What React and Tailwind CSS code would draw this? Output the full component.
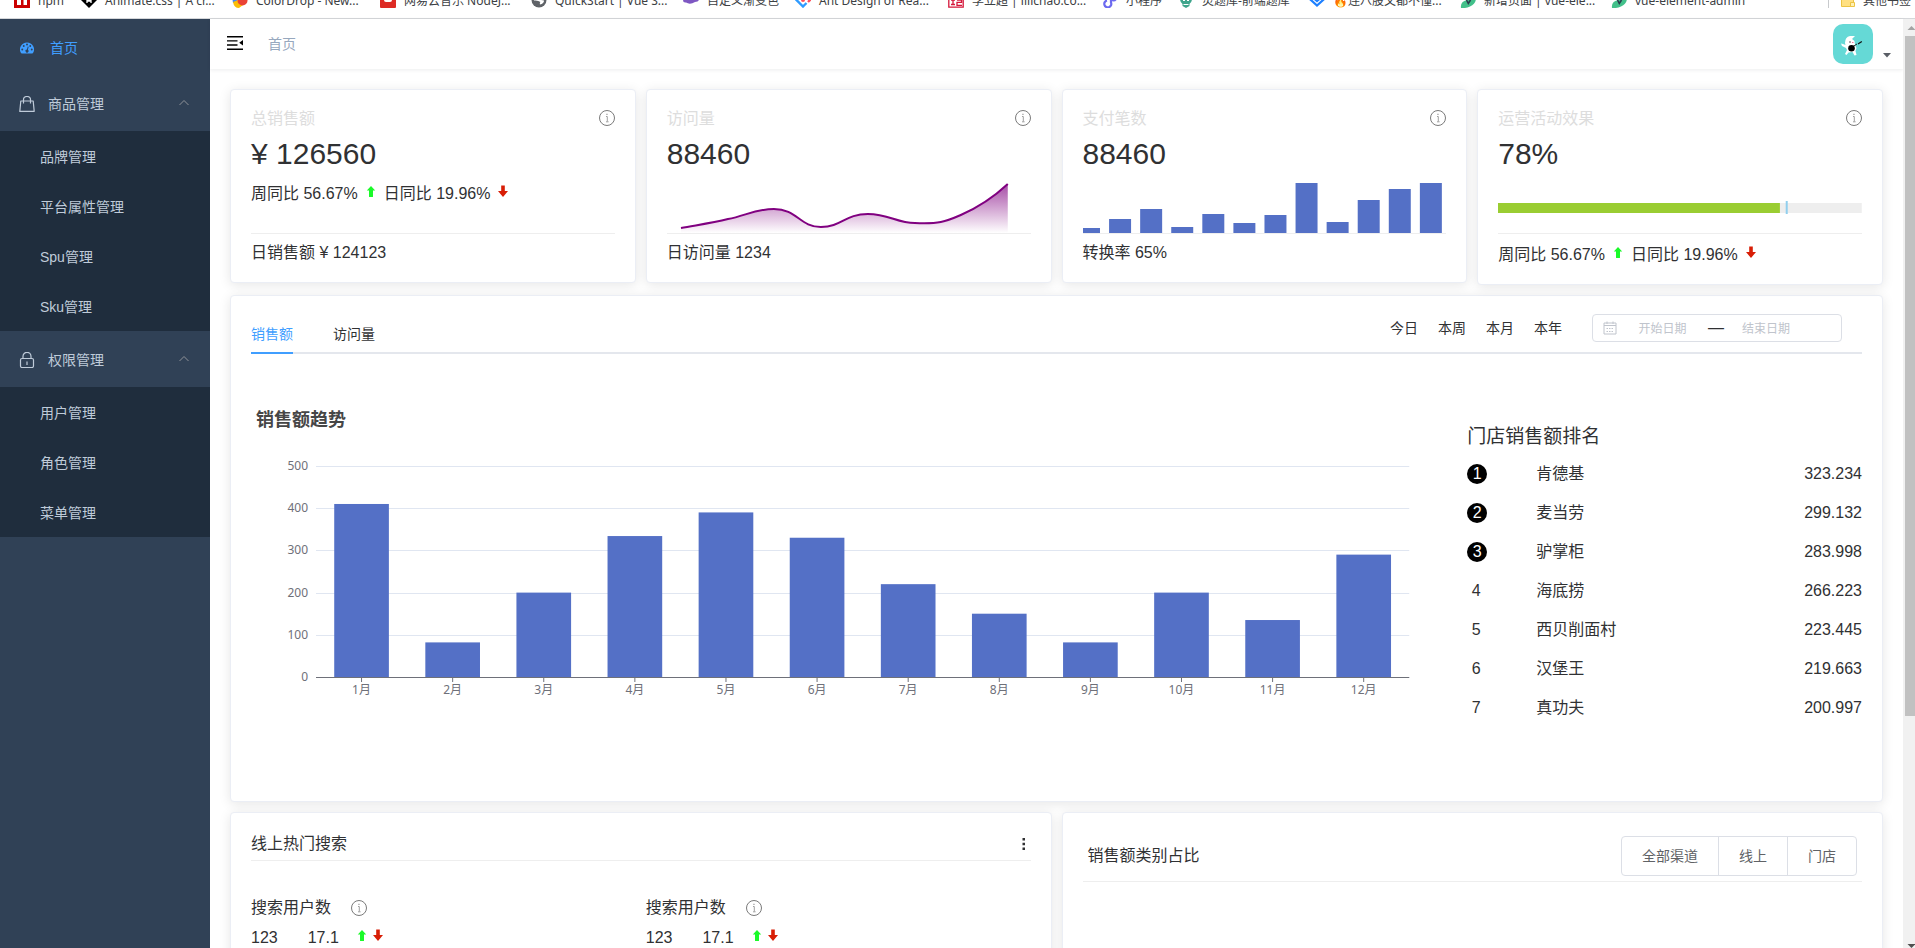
import { useState } from 'react';

// Icons
const DashboardIcon = () => (
  <svg className="h-3.5 w-3.5" viewBox="0 0 28 28" aria-hidden="true">
    <path fill="currentColor" d="M14 3a14 14 0 0 0-12 21.200Q2.600 25 3.500 25h21q.9 0 1.500-.8A14 14 0 0 0 14 3z" />
    <g fill="#304156">
      <circle cx="4.500" cy="17" r="1.900" />
      <circle cx="7.500" cy="10" r="1.900" />
      <circle cx="14" cy="7" r="1.900" />
      <circle cx="20.500" cy="10" r="1.900" />
      <circle cx="23.500" cy="17" r="1.900" />
      <path d="M15.500 10.800l1.800.5-1.500 6a3.100 3.100 0 1 1-1.900-.5z" />
    </g>
  </svg>
);

const BagIcon = () => (
  <svg className="h-4 w-4" viewBox="0 0 16 16" fill="none" stroke="currentColor" strokeWidth="1.200" strokeLinejoin="round" aria-hidden="true">
    <path d="M1.800 5h12.400l1 10.400H.8z" />
    <path d="M4.500 7.500V3.800a3.500 3.300 0 0 1 7 0v3.700" />
  </svg>
);

const LockIcon = () => (
  <svg className="h-4 w-4" viewBox="0 0 16 16" fill="none" stroke="currentColor" strokeWidth="1.200" aria-hidden="true">
    <rect x="1.500" y="6.500" width="13" height="9" rx="1.500" />
    <path d="M4 6.500V4.300a4 4 0 0 1 8 0v2.200M8 9.500v3.500" />
  </svg>
);

const ChevronUp = () => (
  <svg className="h-3 w-3 text-[#909399]" viewBox="0 0 12 12" fill="none" stroke="currentColor" aria-hidden="true">
    <path d="M1.500 7L6 2.500 10.500 7" />
  </svg>
);

const FoldIcon = () => (
  <svg className="h-4 w-4" viewBox="0 0 16 16" aria-hidden="true">
    <path d="M0 0h16v1.400H0zM0 4.200h10.500v1.400H0zM0 8.300h10.500v1.400H0zM0 12.500h16V14H0zM16 4v5.600l-3.800-2.800z" />
  </svg>
);

const InfoIcon = () => (
  <svg className="h-4 w-4 shrink-0" viewBox="0 0 16 16" fill="none" stroke="#7a7a7a" aria-hidden="true">
    <circle cx="8" cy="8" r="7.500" />
    <path stroke="#a0a0a0" d="M7 6.500h1.300v5M7 11.800h2.600" />
    <path stroke="#a0a0a0" strokeWidth="1.300" d="M7.300 4.300h1.300" />
  </svg>
);

const UpArrow = () => (
  <svg className="h-4 w-4 shrink-0 -translate-y-0.5" viewBox="0 0 16 16" fill="#1afa29" aria-label="up">
    <path d="M8 2l4.200 4.600H10v6q0 .5-.5.5H6.500q-.5 0-.5-.5v-6H3.800z" />
  </svg>
);

const DownArrow = () => (
  <svg className="h-4 w-4 shrink-0 -translate-y-0.5" viewBox="0 0 16 16" fill="#d81e06" aria-label="down">
    <path d="M6.200 1.500h3.600V7h3.200L8 13 3 7h3.200z" />
  </svg>
);

const CalendarIcon = () => (
  <svg className="h-3.5 w-3.5 shrink-0" viewBox="0 0 14 14" fill="none" stroke="#c0c4cc" aria-hidden="true">
    <path d="M1 2h12v11H1zM1 4.500h12M4 .5v2.500M10 .5v2.500" />
    <path strokeDasharray="1.500 1" d="M3.500 7.500h7M3.500 10.500h7" />
  </svg>
);

const VueLeaf = () => (
  <>
    <path fill="#42c08a" d="M1 16Q0 9 8 8l8-2q0 6-6 8.500-4 2-9 1.500z" />
    <path fill="none" stroke="#2b3b4e" strokeWidth="1.600" d="M6.500 8l1.800 3.500L10.500 8" />
  </>
);

// Browser bookmarks
const bookmarks = [
  { label: 'npm', width: 'w-[67px]', icon: <path fill="#cb0000" fillRule="evenodd" d="M0 0h16v16H0zM3 3v10h4V6h2.500v7H13V3z" /> },
  {
    label: 'Animate.css | A cr...', width: 'w-[151px]',
    icon: <><path d="M8 0l8 8-8 8-8-8z" /><path fill="none" stroke="#fff" strokeWidth="1.300" d="M6 11V7.500h4V11M6 9h4" /></>,
  },
  {
    label: 'ColorDrop - New...', width: 'w-[148px]',
    icon: <><path fill="#4285f4" d="M0 4h5v7H1z" /><path fill="#fbbc05" d="M1 10l5-2 5 5-4 3q-5 0-6-6z" /><circle cx="10.500" cy="8.500" r="5" fill="#ea4335" /></>,
  },
  {
    label: '网易云音乐 NodeJ...', width: 'w-[151px]',
    icon: <><rect width="16" height="16" rx="1" fill="#dd2b24" /><rect x="4" y="4" width="8" height="6" rx="2" fill="#fff" /></>,
  },
  {
    label: 'QuickStart | Vue S...', width: 'w-[152px]',
    icon: <><circle cx="8" cy="8" r="7.500" fill="#5f6368" /><path fill="#fff" d="M3 5h6l1 3 3 .5q0 3-4 4-.5-2 .5-2.500Q7 8 3 8.500z" /></>,
  },
  { label: '自定义渐变色', width: 'w-[112px]', icon: <path fill="#7e57c2" d="M0 8l9-5 7 5q-1 2-4 2-5 3-9 .5Q0 11 0 8z" /> },
  {
    label: 'Ant Design of Rea...', width: 'w-[153px]',
    icon: <><path fill="none" stroke="#2f9bff" strokeWidth="2.400" d="M11 4L8 1 1.500 8 8 14.500l3.500-3.500" /><circle cx="8" cy="8" r="2" fill="#ff4d5a" /><path fill="none" stroke="#ff4d5a" strokeWidth="2.400" d="M12.500 5.500L15 8l-2 2" /></>,
  },
  {
    label: '李立超 | lilichao.co...', width: 'w-[154px]',
    icon: <path fill="none" stroke="#d5173a" strokeWidth="1.300" d="M.8.800h14.400v14.400H.8zM3 8h4M3 12.500h4M5 8v5M9 8h4.500v2.300H9v3h5" />,
  },
  { label: '小程序', width: 'w-[76px]', icon: <path fill="none" stroke="#6c6af0" strokeWidth="2.200" d="M9 3v7.500a3.500 3.500 0 1 1-4-2M9 7q3 3 5 0" /> },
  {
    label: '灵题库-前端题库', width: 'w-[131px]',
    icon: <><path fill="#3fa58c" d="M2 7q0-7 6-7t6 7q0 3-2.500 5v2L8 16l-3.500-2v-2Q2 10 2 7z" /><path stroke="#fff" d="M5 8.500h2M9 8.500h2M5.500 12.500h5" /></>,
  },
  { label: '🔥连八股文都不懂...', width: 'w-[151px]', icon: <path fill="none" stroke="#1e80ff" strokeWidth="2.200" d="M.8 7L8 13.500 15.200 7M5 6.500L8 9l3-2.500" /> },
  { label: '新增页面 | vue-ele...', width: 'w-[151px]', icon: <VueLeaf /> },
  { label: 'vue-element-admin', width: 'w-[151px]', icon: <VueLeaf /> },
];

const menus = [
  { title: '商品管理', icon: <BagIcon />, children: ['品牌管理', '平台属性管理', 'Spu管理', 'Sku管理'] },
  { title: '权限管理', icon: <LockIcon />, children: ['用户管理', '角色管理', '菜单管理'] },
];

const payBars = [5, 14, 24, 6, 19, 10, 18, 50, 11, 33, 44, 50];
const monthSales = [410, 82, 200, 334, 390, 330, 220, 150, 82, 200, 135, 290];

const ranking = [
  ['肯德基', '323.234'],
  ['麦当劳', '299.132'],
  ['驴掌柜', '283.998'],
  ['海底捞', '266.223'],
  ['西贝削面村', '223.445'],
  ['汉堡王', '219.663'],
  ['真功夫', '200.997'],
];

function BookmarkBar() {
  return (
    <nav className="flex h-[19px] shrink-0 justify-between overflow-hidden border-b border-[#d5d7da] bg-white pl-3.5 font-['Noto_Sans','Noto_Sans_CJK_SC',sans-serif] text-xs text-[#3c4043]">
      <div className="-mt-2 flex h-4">
        {bookmarks.map((b) => (
          <a key={b.label} href="#" className={`flex h-4 shrink-0 items-center gap-2 whitespace-nowrap ${b.width}`}>
            <svg className="h-4 w-4 shrink-0" viewBox="0 0 16 16" aria-hidden="true">{b.icon}</svg>
            <span className="pt-0.5 leading-4">{b.label}</span>
          </a>
        ))}
      </div>
      <a href="#" className="-mt-2 flex h-4 shrink-0 items-center gap-2 whitespace-nowrap border-l border-[#c8cacd] pl-3 pr-1">
        <svg className="h-4 w-3.5" viewBox="0 0 14 16" aria-hidden="true">
          <path fill="#ffe082" stroke="#ecc445" d="M.5 2.500h12v12H.5z" />
          <path fill="#fff0b3" stroke="#ecc445" d="M9.500 10.500h4v4h-4z" />
        </svg>
        <span className="pt-0.5 leading-4">其他书签</span>
      </a>
    </nav>
  );
}

function Sidebar() {
  return (
    <aside className="w-[210px] shrink-0 bg-[#304156] text-sm text-[#bfcbd9]">
      <a href="#" className="flex h-14 items-center gap-4 px-5 pt-0.5 text-[#409eff]">
        <DashboardIcon />
        首页
      </a>
      {menus.map((menu) => (
        <div key={menu.title}>
          <button type="button" className="flex h-14 w-full items-center gap-[13px] pl-[19px] pr-5 pt-0.5">
            {menu.icon}
            <span className="flex-1 text-left">{menu.title}</span>
            <ChevronUp />
          </button>
          <div className="bg-[#1f2d3d]">
            {menu.children.map((name) => (
              <a key={name} href="#" className="flex h-[50px] items-center pl-10 pt-0.5">{name}</a>
            ))}
          </div>
        </div>
      ))}
    </aside>
  );
}

function Navbar() {
  return (
    <header className="flex h-[50px] shrink-0 items-center bg-white pl-[17px] pr-3 shadow-[0_1px_4px_rgba(0,21,41,0.08)]">
      <button type="button" aria-label="收起菜单"><FoldIcon /></button>
      <span className="ml-[25px] flex-1 text-sm text-[#97a8be]">首页</span>
      <button type="button" aria-label="用户菜单" className="flex items-end gap-2.5">
        <svg className="h-10 w-10 rounded-[10px] bg-[#65d9d6]" viewBox="0 0 40 40" aria-hidden="true">
          <path fill="#fff" d="M12 19q0-6 5-7h5l-3 3 2.500 2 .5 4 1.500 3-1 3 1 4-2 .5-2-3.500-4 .5-2 2.500-1.500-1 2-4-1-2-4-2-1-2.500 2 .5 2.500 1z" />
          <path stroke="#111" strokeWidth=".9" d="M20 22.500l4-2.500" />
          <path stroke="#111" strokeWidth="1.200" d="M25 20l3.800-2.500" />
          <circle cx="18.500" cy="24.300" r="3.300" />
          <path stroke="#333" strokeWidth=".8" d="M16 18h2" />
          <path stroke="#e58" strokeWidth=".8" d="M19 18.500h1.500" />
        </svg>
        <svg className="mb-1.5 h-1.5 w-2" viewBox="0 0 8 6" fill="#5a5e66" aria-hidden="true">
          <path d="M0 1h8L4 5.500z" />
        </svg>
      </button>
    </header>
  );
}

function Card({ className = '', children }) {
  return (
    <section className={`rounded border border-[#ebeef5] bg-white px-5 shadow-[0_2px_12px_rgba(0,0,0,0.1)] ${className}`}>
      {children}
    </section>
  );
}

function Compare() {
  return (
    <div className="flex items-center gap-[5px] pt-0.5 leading-[18px]">
      <span>周同比 56.67%</span>
      <UpArrow />
      <span>日同比 19.96%</span>
      <DownArrow />
    </div>
  );
}

function StatCard({ title, value, footer, children }) {
  return (
    <Card className="py-5">
      <div className="flex h-4 items-center justify-between text-[#dddddd]">
        <span className="pt-0.5">{title}</span>
        <InfoIcon />
      </div>
      <div className="mt-2.5 text-3xl leading-9">{value}</div>
      <div className="mt-[11px] h-[50px]">{children}</div>
      <div className="border-t border-[#eeeeee] pt-2.5 leading-[18px]">{footer}</div>
    </Card>
  );
}

function VisitChart() {
  const line = 'M14 45C30 42 45 40 61 36C78 33 88 26 107 26C130 26 133 44 154 44C175 44 178 31 201 31C222 31 230 40 248 40C272 41 278 39 294 32C310 25 326 15 341 1';
  return (
    <svg className="block h-full w-full" viewBox="0 0 364 50" preserveAspectRatio="none" aria-hidden="true">
      <defs>
        <linearGradient id="visit" x1="0" y1="0" x2="0" y2="1">
          <stop offset="0" stopColor="#800080" stopOpacity="0.700" />
          <stop offset="1" stopColor="#800080" stopOpacity="0" />
        </linearGradient>
      </defs>
      <path d={`${line}V50H14z`} fill="url(#visit)" />
      <path d={line} fill="none" stroke="#800080" strokeWidth="2" />
    </svg>
  );
}

function PayChart() {
  return (
    <svg className="block h-full w-full" viewBox="0 0 364 50" preserveAspectRatio="none" fill="#5470c6" aria-hidden="true">
      {payBars.map((h, i) => (
        <rect key={i} x={i * 31.100 - 5} y={50 - h} width="22" height={h} />
      ))}
    </svg>
  );
}

function ProgressChart() {
  return (
    <svg className="block h-full w-full" aria-hidden="true">
      <rect y="20" width="100%" height="10" fill="#eeeeee" />
      <rect y="20" width="77.500%" height="10" fill="#9acd32" />
      <rect x="79.100%" y="18" width="2" height="13" fill="#91cfee" />
    </svg>
  );
}

function SalesChart() {
  const bottom = 211;
  const ticks = [0, 100, 200, 300, 400, 500];
  return (
    <div className="font-['Noto_Sans','Noto_Sans_CJK_SC',sans-serif]">
      <h3 className="pl-[5px] text-lg font-bold leading-6 text-[#464646]">销售额趋势</h3>
      <div className="mt-[35px] pl-[65px] pr-[50px]">
        <svg className="block h-[240px] w-full overflow-visible text-xs" fill="#6e7079">
          {ticks.map((t) => {
            const y = Math.round(bottom - t * 0.422) + 0.5;
            return (
              <g key={t}>
                <line x1="0" x2="100%" y1={y} y2={y} stroke="#e0e6f1" />
                <text x="-8" y={y + 3} textAnchor="end">{t}</text>
              </g>
            );
          })}
          {monthSales.map((v, i) => {
            const center = `${((i + 0.5) / 12) * 100}%`;
            return (
              <g key={i}>
                <rect x={`${((i + 0.2) / 12) * 100}%`} y={bottom - v * 0.422} width="5%" height={v * 0.422} fill="#5470c6" />
                <line x1={center} x2={center} y1={bottom} y2={bottom + 5} stroke="#6e7079" />
                <text x={center} y={bottom + 17} textAnchor="middle">{i + 1}月</text>
              </g>
            );
          })}
          <line x1="0" x2="100%" y1={bottom + 0.5} y2={bottom + 0.5} stroke="#6e7079" />
        </svg>
      </div>
    </div>
  );
}

function Ranking() {
  return (
    <div className="pl-2 pt-4">
      <h3 className="text-[19px] leading-7">门店销售额排名</h3>
      <table className="mt-[3px] w-full">
        <tbody>
          {ranking.map(([name, value], i) => (
            <tr key={name} className="h-[39px]">
              <td className="w-[69px] p-0">
                <span className={`flex h-5 items-center justify-center rounded-full leading-5 ${i < 3 ? 'w-5 bg-black text-white' : 'w-[18px]'}`}>{i + 1}</span>
              </td>
              <td className="p-0">{name}</td>
              <td className="p-0 text-right">{value}</td>
            </tr>
          ))}
        </tbody>
      </table>
    </div>
  );
}

function SalesPanel() {
  const [tab, setTab] = useState('销售额');
  return (
    <Card className="mt-2.5 h-[507px] pt-[18px]">
      <div className="flex items-start justify-between text-sm shadow-[inset_0_-2px_0_#e4e7ed]">
        <div className="flex gap-10">
          {['销售额', '访问量'].map((name) => (
            <button
              key={name}
              type="button"
              onClick={() => setTab(name)}
              className={`h-10 border-b-2 pt-0.5 ${tab === name ? 'border-[#409eff] text-[#409eff]' : 'border-transparent'}`}
            >
              {name}
            </button>
          ))}
        </div>
        <div className="flex h-7 items-center gap-5 pr-5">
          {['今日', '本周', '本月', '本年'].map((d) => (
            <button key={d} type="button">{d}</button>
          ))}
          <div className="ml-2.5 flex h-7 w-[250px] items-center rounded border border-[#dcdfe6] pl-2.5 text-xs">
            <CalendarIcon />
            <input aria-label="开始日期" placeholder="开始日期" className="w-[91px] pt-0.5 text-center outline-none placeholder:text-[#c0c4cc]" />
            <span className="w-4 text-base leading-6">—</span>
            <input aria-label="结束日期" placeholder="结束日期" className="w-[84px] pt-0.5 text-center outline-none placeholder:text-[#c0c4cc]" />
          </div>
        </div>
      </div>
      <div className="grid grid-cols-4 pt-[53px]">
        <div className="col-span-3"><SalesChart /></div>
        <Ranking />
      </div>
    </Card>
  );
}

function HotSearch() {
  return (
    <Card className="h-[500px] pt-5">
      <div className="flex items-center justify-between border-b border-[#eeeeee] pb-[5px] leading-[22px]">
        <span>线上热门搜索</span>
        <button type="button" aria-label="更多">
          <svg className="h-4 w-4" viewBox="0 0 16 16" fill="#303133" aria-hidden="true">
            <path d="M7.500 2H10v2.600H7.500zM7.500 6.700H10v2.600H7.500zM7.500 11.400H10V14H7.500z" />
          </svg>
        </button>
      </div>
      <div className="mt-9 grid grid-cols-2 gap-2.5">
        {[0, 1].map((n) => (
          <div key={n}>
            <div className="flex items-center gap-5 leading-[22px]">
              搜索用户数
              <InfoIcon />
            </div>
            <div className="mt-2 flex items-center leading-[22px]">
              <span>123</span>
              <span className="ml-[30px] mr-[15px]">17.1</span>
              <UpArrow />
              <DownArrow />
            </div>
          </div>
        ))}
      </div>
    </Card>
  );
}

function CategoryPanel() {
  return (
    <Card className="h-[500px] pt-[23px]">
      <div className="flex items-center justify-between border-b border-[#eeeeee] px-[5px] pb-[5px]">
        <span>销售额类别占比</span>
        <div className="flex h-10 divide-x divide-[#dcdfe6] rounded border border-[#dcdfe6] text-sm text-[#606266]">
          {['全部渠道', '线上', '门店'].map((name) => (
            <button key={name} type="button" className="px-5">{name}</button>
          ))}
        </div>
      </div>
    </Card>
  );
}

function Scrollbar() {
  return (
    <div className="flex w-3 shrink-0 flex-col overflow-hidden bg-[#f1f1f1]" aria-hidden="true">
      <svg className="h-[17px] w-[17px] shrink-0" viewBox="0 0 17 17" fill="#a3a3a3"><path d="M4.500 11h8l-4-4z" /></svg>
      <div className="flex-1">
        <div className="ml-0.5 h-[76%] w-[15px] bg-[#c1c1c1]" />
      </div>
      <svg className="h-[17px] w-[17px] shrink-0" viewBox="0 0 17 17" fill="#505050"><path d="M4.500 13h8l-4 4z" /></svg>
    </div>
  );
}

export default function App() {
  return (
    <div className="flex h-screen flex-col overflow-hidden bg-white font-['Liberation_Sans','Noto_Sans_CJK_SC',sans-serif] text-base text-[#303133]">
      <BookmarkBar />
      <div className="flex min-h-0 flex-1">
        <Sidebar />
        <div className="flex min-w-0 flex-1 flex-col">
          <Navbar />
          <main className="min-h-0 flex-1 overflow-hidden p-5">
            <div className="grid grid-cols-4 items-start gap-2.5">
              <StatCard title="总销售额" value="¥ 126560" footer="日销售额 ¥ 124123"><Compare /></StatCard>
              <StatCard title="访问量" value="88460" footer="日访问量 1234"><VisitChart /></StatCard>
              <StatCard title="支付笔数" value="88460" footer="转换率 65%"><PayChart /></StatCard>
              <StatCard title="运营活动效果" value="78%" footer={<Compare />}><ProgressChart /></StatCard>
            </div>
            <SalesPanel />
            <div className="mt-2.5 grid grid-cols-2 gap-2.5">
              <HotSearch />
              <CategoryPanel />
            </div>
          </main>
        </div>
        <Scrollbar />
      </div>
    </div>
  );
}
